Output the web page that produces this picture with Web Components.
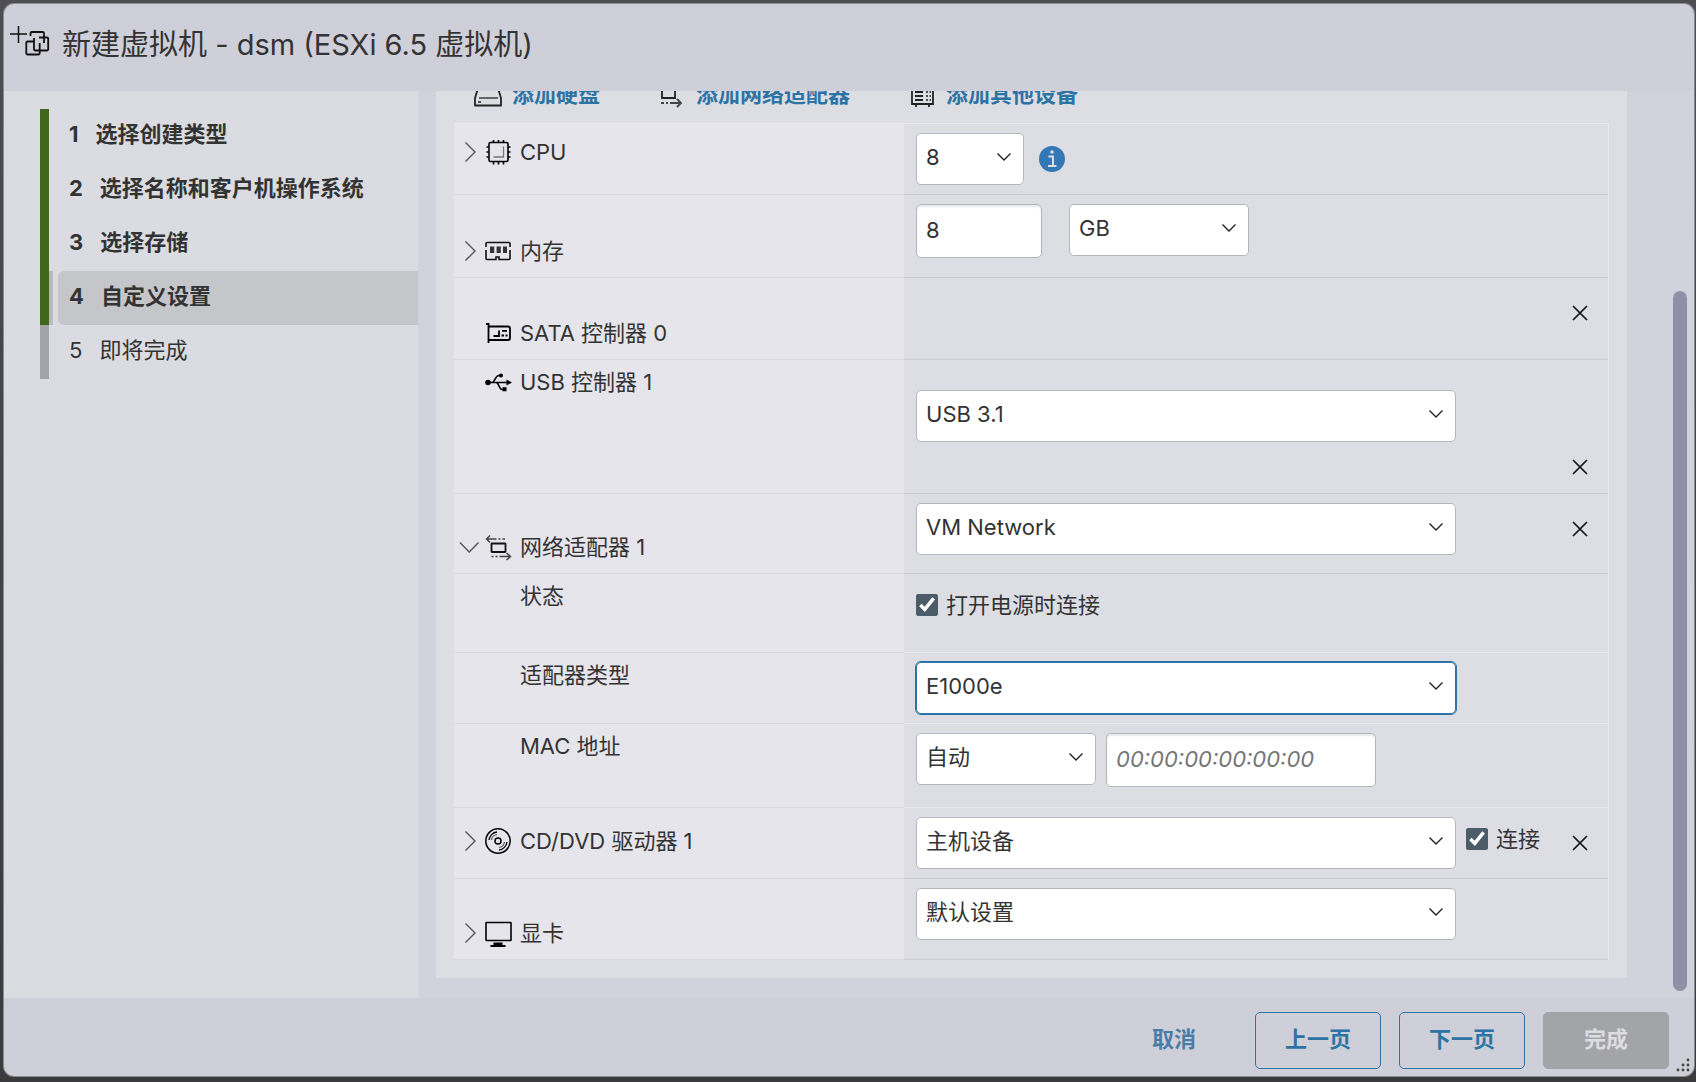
<!DOCTYPE html>
<html lang="zh-CN">
    <head>
        <meta charset="utf-8">
        <title>新建虚拟机</title>
        <style>
            html {
                height: 100%;
            }
            body {
                margin: 0;
                min-height: 100%;
                display: flex;
                box-sizing: border-box;
                padding: 4px 2px 6px 4px;
                background: linear-gradient(#4d4d52, #3b3b3e);
                color: #333;
                font: 22px/28px Inter, "Noto Sans CJK SC", sans-serif;
            }
        </style>
    </head>
    <body>
        <vm-wizard>
            <span slot="title">新建虚拟机 - dsm (ESXi 6.5 虚拟机)</span>

            <wizard-steps slot="steps">
                <wizard-step number="1" state="done">选择创建类型</wizard-step>
                <wizard-step number="2" state="done">选择名称和客户机操作系统</wizard-step>
                <wizard-step number="3" state="done">选择存储</wizard-step>
                <wizard-step number="4" state="active">自定义设置</wizard-step>
                <wizard-step number="5">即将完成</wizard-step>
            </wizard-steps>

            <hw-panel>
                <hw-action slot="action" icon="disk">添加硬盘</hw-action>
                <hw-action slot="action" icon="network">添加网络适配器</hw-action>
                <hw-action slot="action" icon="device">添加其他设备</hw-action>

                <hw-row icon="cpu" arrow="closed" style="--label-top: 14px; --gap: 15px">
                    <label slot="label" for="cpu">CPU</label>
                    <clr-select size="small"><select id="cpu"><option>8</option></select></clr-select>
                    <hw-icon name="info"></hw-icon>
                </hw-row>
                <hw-row icon="memory" arrow="closed" align="end" style="--row: 83px; --gap: 27px">
                    <label slot="label" for="memory">内存</label>
                    <clr-input size="small"><input id="memory" value="8"></clr-input>
                    <clr-select size="medium"><select aria-label="单位"><option>GB</option></select></clr-select>
                </hw-row>
                <hw-row icon="sata" align="end" removable style="--row: 82px">
                    <span slot="label">SATA 控制器 0</span>
                </hw-row>
                <hw-row icon="usb" removable="end" style="--row: 134px; --control-top: 30px">
                    <label slot="label" for="usb">USB 控制器 1</label>
                    <clr-select><select id="usb"><option>USB 3.1</option></select></clr-select>
                </hw-row>
                <hw-row icon="adapter" arrow="open" align="end" removable style="--row: 80px">
                    <label slot="label" for="network">网络适配器 1</label>
                    <clr-select><select id="network"><option>VM Network</option></select></clr-select>
                </hw-row>
                <hw-row light style="--row: 79px">
                    <span slot="label">状态</span>
                    <clr-check><input type="checkbox" id="power" checked><label for="power">打开电源时连接</label></clr-check>
                </hw-row>
                <hw-row light>
                    <label slot="label" for="type">适配器类型</label>
                    <clr-select focused><select id="type"><option>E1000e</option></select></clr-select>
                </hw-row>
                <hw-row light style="--row: 84px">
                    <label slot="label" for="mac-mode">MAC 地址</label>
                    <clr-select size="medium"><select id="mac-mode"><option>自动</option></select></clr-select>
                    <clr-input><input aria-label="MAC 地址" placeholder="00:00:00:00:00:00"></clr-input>
                </hw-row>
                <hw-row icon="cd" arrow="closed" align="center" removable>
                    <label slot="label" for="cd">CD/DVD 驱动器 1</label>
                    <clr-select><select id="cd"><option>主机设备</option></select></clr-select>
                    <clr-check><input type="checkbox" id="connect" checked><label for="connect">连接</label></clr-check>
                </hw-row>
                <hw-row icon="display" arrow="closed" align="end" style="--row: 81px">
                    <label slot="label" for="display">显卡</label>
                    <clr-select><select id="display"><option>默认设置</option></select></clr-select>
                </hw-row>
            </hw-panel>

            <clr-button slot="buttons" kind="link">取消</clr-button>
            <clr-button slot="buttons">上一页</clr-button>
            <clr-button slot="buttons">下一页</clr-button>
            <clr-button slot="buttons" disabled>完成</clr-button>
        </vm-wizard>

        <script>
            const icons = {
                vm: `<svg width="40" height="32" viewBox="0 0 40 32" fill="none" stroke="#111" stroke-width="1.8">
                    <path d="M0 9h17M8.500 1v17" stroke-width="1.500"/>
                    <path d="M20.500 11V8.500a1.500 1.500 0 0 1 1.500-1.500h10.500a1.500 1.500 0 0 1 1.500 1.500V18M29 12.500h8a1.200 1.200 0 0 1 1.200 1.200v10.600a1.200 1.200 0 0 1-1.200 1.200H25.200a1.200 1.200 0 0 1-1.200-1.200V13"/>
                    <path d="M24 16.500h-6.500a1.200 1.200 0 0 0-1.200 1.200v10.600a1.200 1.200 0 0 0 1.200 1.200H28.500a1.200 1.200 0 0 0 1.200-1.200V18"/>
                </svg>`,
                disk: `<svg width="28" height="28" viewBox="0 0 28 28" fill="none" stroke="#222" stroke-width="1.8">
                    <path d="M5 5h18l4 13v7.500H1V18z" stroke-linejoin="round"/>
                    <path d="M5 18h19" stroke="#666"/><path d="M4 22h3" stroke-width="1.500"/>
                </svg>`,
                network: `<svg width="28" height="28" viewBox="0 0 28 28" fill="none" stroke="#222" stroke-width="1.8">
                    <path d="M4 7h13v11H4z"/>
                    <path d="M3 23h3M8 23h2M12 23h11M19 19l4 4-4 4" stroke="#444"/>
                </svg>`,
                device: `<svg width="28" height="28" viewBox="0 0 28 28" fill="none" stroke="#222" stroke-width="1.8">
                    <path d="M4 4h21v20H4zM8 24v3M21 24v3"/>
                    <path d="M7 8h8M7 12h8M7 16h8M7 20h8"/>
                    <path d="M18 12h2M21.500 12h1.500M18 16h2M21.500 16h1.500M18 20h2M21.500 20h1.500" stroke-width="1.500"/>
                </svg>`,
                cpu: `<svg width="28" height="28" viewBox="0 0 28 28" fill="none" stroke="#000" stroke-width="1.600">
                    <rect x="5" y="4.500" width="19" height="19" rx="1.500"/>
                    <path d="M9.500 2v2M14.500 2v2M19.500 2v2M9.500 24v2.500M14.500 24v2.500M19.500 24v2.500M2.500 9h2M2.500 14h2M2.500 19h2M24 9h2.500M24 14h2.500M24 19h2.500"/>
                    <path d="M19.500 8.500v10.500H9.500" stroke="#777" stroke-width="1.300"/>
                </svg>`,
                memory: `<svg width="28" height="28" viewBox="0 0 28 28" fill="none" stroke="#111" stroke-width="1.600">
                    <path d="M2 10V6.500q0-1 1-1h22q1 0 1 1V10M2 13v8.500q0 1 1 1h9V20h3v2.500h10q1 0 1-1V13"/>
                    <path d="M6 9.500h4.200v6.500H6zM12.600 9.500h4.200v6.500h-4.200zM19 9.500h4v6.500h-4z" fill="#333" stroke="none"/>
                </svg>`,
                sata: `<svg width="28" height="28" viewBox="0 0 28 28" fill="none" stroke="#000" stroke-width="1.800">
                    <path d="M2 5h2.500v19M4.500 7.500h19.500q2 0 2 2v9.500q0 2-2 2H4.500"/>
                    <path d="M9.500 17h5.500v-5.500M18 11.800h5M17.500 16.500h2.500M21.500 16.500h2"/>
                </svg>`,
                usb: `<svg width="28" height="28" viewBox="0 0 28 28" fill="none" stroke="#000" stroke-width="1.600">
                    <path d="M3 14.500h20M8 14.500c3 0 3-7 7-7h2M12 14.500c3 0 3 7 6 7h1"/>
                    <circle cx="4" cy="14.500" r="2.800" fill="#000" stroke="none"/>
                    <circle cx="17" cy="7.500" r="2" fill="#000" stroke="none"/>
                    <path d="M18.500 19.300h4v4h-4zM22.500 11.500l5.500 3-5.500 3z" fill="#000" stroke="none"/>
                </svg>`,
                adapter: `<svg width="28" height="28" viewBox="0 0 28 28" fill="none" stroke="#111" stroke-width="1.800">
                    <rect x="7.500" y="10.500" width="14" height="8.500" rx=".5"/>
                    <path d="M2.500 6h10M14.500 6h2M18.500 6h2.500M6 2.500L2.500 6L6 9.500M7.500 23.500h2M11.500 23.500h2M15.500 23.500h11M22.500 20l4 3.500-4 3.500" stroke="#444" stroke-width="1.500"/>
                </svg>`,
                cd: `<svg width="28" height="28" viewBox="0 0 28 28" fill="none" stroke="#000" stroke-width="1.500">
                    <circle cx="14" cy="14" r="12.200"/><circle cx="14" cy="14" r="3"/>
                    <path d="M5 13a9 9 0 0 1 8-8M23 15a9 9 0 0 1-8 8" stroke-width="1.300"/>
                    <path d="M7.500 13A6.500 6.500 0 0 1 13 7.500M20.500 15a6.500 6.500 0 0 1-5.500 5.500" stroke="#555" stroke-width="1.200"/>
                </svg>`,
                display: `<svg width="28" height="28" viewBox="0 0 28 28" fill="none" stroke="#000" stroke-width="1.600">
                    <rect x="2" y="3.500" width="25" height="18" rx=".5"/>
                    <path d="M9.500 23.500h9v2.500h3v2h-15v-2h3z" fill="#000" stroke="none"/>
                </svg>`,
                info: `<svg width="26" height="26" viewBox="0 0 26 26">
                    <circle cx="13" cy="13" r="13" fill="#3477b5"/>
                    <circle cx="13" cy="6" r="1.800" fill="#dddee4"/>
                    <path d="M9.500 10.500h4.500v9M9 20h8.500" fill="none" stroke="#dddee4" stroke-width="2"/>
                </svg>`,
                closed: `<svg width="20" height="20" viewBox="0 0 20 20" fill="none" stroke="#555" stroke-width="1.400"><path d="M6.500 .5l9.500 9.500-9.500 9.500"/></svg>`,
                open: `<svg width="20" height="20" viewBox="0 0 20 20" fill="none" stroke="#555" stroke-width="1.400"><path d="M1 5.500l9.200 9.500L19.500 5.500"/></svg>`,
                caret: `<svg width="16" height="10" viewBox="0 0 16 10" fill="none" stroke="#222" stroke-width="1.400"><path d="M1.500 1.500L8 8l6.500-6.500"/></svg>`,
                close: `<svg width="16" height="16" viewBox="0 0 16 16" fill="none" stroke="#111" stroke-width="1.700"><path d="M1 1l14 14M15 1L1 15"/></svg>`,
                grip: `<svg width="14" height="14" viewBox="0 0 14 14" fill="#444">
                    <circle cx="12" cy="2" r="1.400"/><circle cx="7" cy="7" r="1.400"/><circle cx="12" cy="7" r="1.400"/>
                    <circle cx="2" cy="12" r="1.400"/><circle cx="7" cy="12" r="1.400"/><circle cx="12" cy="12" r="1.400"/>
                </svg>`
            };

            function define(name, render) {
                customElements.define(name, class extends HTMLElement {
                    connectedCallback() {
                        if (this.shadowRoot)
                            return;
                        this.attachShadow({ mode: 'open' }).innerHTML = render(this);
                    }
                });
            }

            define('hw-icon', el => `
                <style>
                    :host { display: block; flex: none; }
                    svg { display: block; }
                </style>
                ${icons[el.getAttribute('name')]}`);

            define('vm-wizard', () => `
                <style>
                    :host {
                        position: relative;
                        flex: 1;
                        display: flex;
                        flex-direction: column;
                        min-width: 0;
                        background: #cfcfd9;
                        border-radius: 10px;
                        box-shadow: 0 0 0 1px #8b8b90;
                        overflow: hidden;
                    }
                    header {
                        display: flex;
                        align-items: center;
                        gap: 12px;
                        height: 87px;
                        padding-left: 6px;
                        box-sizing: border-box;
                    }
                    h1 {
                        margin: 0;
                        padding-bottom: 6px;
                        font-size: 29px;
                        line-height: 36px;
                        font-weight: 400;
                    }
                    header hw-icon { padding-bottom: 14px; }
                    main {
                        flex: 1;
                        display: grid;
                        grid-template-columns: 414px 1fr 67px;
                        background: #d2d2dc;
                    }
                    .side, .track { display: flex; }
                    .content { padding: 0 0 18px 18px; }
                    .track { padding: 200px 0 7px 46px; }
                    .thumb {
                        width: 14px;
                        border-radius: 7px;
                        background: #8f8fa5;
                    }
                    footer {
                        display: flex;
                        justify-content: flex-end;
                        gap: 18px;
                        padding: 14px 25px 7px;
                    }
                    .grip { position: absolute; right: 4px; bottom: 4px; }
                </style>
                <header><hw-icon name="vm"></hw-icon><h1><slot name="title"></slot></h1></header>
                <main>
                    <div class="side"><slot name="steps"></slot></div>
                    <div class="content"><slot></slot></div>
                    <div class="track"><div class="thumb"></div></div>
                </main>
                <footer><slot name="buttons"></slot></footer>
                <hw-icon class="grip" name="grip"></hw-icon>`);

            define('wizard-steps', () => `
                <style>
                    :host {
                        display: block;
                        flex: 1;
                        padding: 18px 0 0 36px;
                        background: #dbdce1;
                    }
                </style>
                <nav><slot></slot></nav>`);

            define('wizard-step', el => `
                <style>
                    :host {
                        display: flex;
                        height: 54px;
                        border-left: 9px solid #a3a4a8;
                    }
                    :host([state]) {
                        border-color: #40681d;
                        font-weight: 700;
                    }
                    :host([state=active]) {
                        background: linear-gradient(#b9babe, #b9babe) 0 0 / 4px 100% no-repeat;
                    }
                    button {
                        flex: 1;
                        display: flex;
                        align-items: center;
                        gap: 17px;
                        margin: 0 0 0 9px;
                        padding: 0 0 4px 11px;
                        border: 0;
                        border-radius: 6px 0 0 6px;
                        background: none;
                        color: inherit;
                        font: inherit;
                    }
                    :host([state=active]) button { background: #c5c6ca; }
                </style>
                <button type="button"><span>${el.getAttribute('number')}</span><slot></slot></button>`);

            define('hw-panel', () => `
                <style>
                    :host {
                        display: block;
                        padding: 0 18px 18px;
                        background: #dddee4;
                    }
                    .actions {
                        display: flex;
                        align-items: flex-end;
                        gap: 58px;
                        height: 32px;
                        padding-left: 20px;
                        box-sizing: border-box;
                        overflow: hidden;
                    }
                    .rows {
                        border: solid #e8e8ed;
                        border-width: 1px 1px 0 0;
                    }
                </style>
                <div class="actions"><slot name="action"></slot></div>
                <div class="rows"><slot></slot></div>`);

            define('hw-action', el => `
                <style>
                    :host { display: block; padding-bottom: 15px; }
                    button {
                        display: flex;
                        align-items: center;
                        gap: 10px;
                        padding: 0;
                        border: 0;
                        background: none;
                        color: #2d73a3;
                        font: inherit;
                        font-weight: 700;
                    }
                </style>
                <button type="button"><hw-icon name="${el.getAttribute('icon')}"></hw-icon><slot></slot></button>`);

            define('hw-row', el => `
                <style>
                    :host {
                        display: grid;
                        grid-template-columns: 39% 1fr;
                        min-height: var(--row, 71px);
                    }
                    .name {
                        display: flex;
                        align-items: flex-start;
                        padding: var(--label-top, 8px) 0 12px 5px;
                        background: #e6e5eb;
                        border-bottom: 1px solid #d9d9de;
                    }
                    :host([align=end]) .name { align-items: flex-end; }
                    :host([align=center]) .name { align-items: center; padding: 0 0 4px 5px; }
                    .arrow {
                        display: flex;
                        align-items: center;
                        width: 20px;
                        height: 28px;
                        margin-right: 5px;
                    }
                    .arrow button { display: block; padding: 0; border: 0; background: none; }
                    .icon { width: 28px; margin-right: 8px; }
                    .value {
                        display: flex;
                        justify-content: space-between;
                        border-bottom: 1px solid #cbccd2;
                    }
                    :host([light]) .value { border-color: #e8e8ed; }
                    .controls {
                        display: flex;
                        align-items: flex-start;
                        gap: var(--gap, 10px);
                        padding: var(--control-top, 9px) 0 9px 12px;
                    }
                    ::slotted(hw-icon) { align-self: center; }
                    .remove {
                        width: 56px;
                        height: 52px;
                        margin-top: 9px;
                        padding: 0;
                        border: 0;
                        background: none;
                        display: flex;
                        align-items: center;
                        justify-content: center;
                    }
                    :host([removable=end]) .remove { align-self: flex-end; }
                </style>
                <div class="name">
                    <div class="arrow">${el.hasAttribute('arrow') ? `<button type="button" aria-label="展开"><hw-icon name="${el.getAttribute('arrow')}"></hw-icon></button>` : ''}</div>
                    <div class="icon">${el.hasAttribute('icon') ? `<hw-icon name="${el.getAttribute('icon')}"></hw-icon>` : ''}</div>
                    <slot name="label"></slot>
                </div>
                <div class="value">
                    <div class="controls"><slot></slot></div>
                    ${el.hasAttribute('removable') ? '<button class="remove" type="button" aria-label="移除"><hw-icon name="close"></hw-icon></button>' : ''}
                </div>`);

            define('clr-select', () => `
                <style>
                    :host {
                        position: relative;
                        display: block;
                        width: 540px;
                    }
                    :host([size=small]) { width: 108px; }
                    :host([size=medium]) { width: 180px; }
                    ::slotted(select) {
                        appearance: none;
                        display: block;
                        width: 100%;
                        height: 52px;
                        box-sizing: border-box;
                        margin: 0;
                        padding: 0 32px 4px 9px;
                        border: 1px solid #b5b5ba;
                        border-radius: 5px;
                        background: #fff;
                        color: #333;
                        font: inherit;
                    }
                    :host([focused]) ::slotted(select) {
                        outline: 1px solid #2b72a6;
                        border-color: #2b72a6;
                    }
                    hw-icon {
                        position: absolute;
                        right: 12px;
                        top: 19px;
                        pointer-events: none;
                    }
                </style>
                <slot></slot><hw-icon name="caret"></hw-icon>`);

            define('clr-input', () => `
                <style>
                    :host { display: block; width: 270px; }
                    :host([size=small]) { width: 126px; }
                    ::slotted(input) {
                        display: block;
                        width: 100%;
                        height: 54px;
                        box-sizing: border-box;
                        margin: 0;
                        padding: 0 9px 2px;
                        border: 1px solid #b5b5ba;
                        border-radius: 5px;
                        background: #fff;
                        box-shadow: inset 0 2px 2px #e8e8ec;
                        color: #333;
                        font: inherit;
                    }
                    ::slotted(input:placeholder-shown) { font-style: italic; }
                </style>
                <slot></slot>`);

            define('clr-check', () => `
                <style>
                    :host {
                        display: flex;
                        align-items: center;
                        gap: 8px;
                        height: 44px;
                        white-space: nowrap;
                    }
                    ::slotted(input) {
                        width: 22px;
                        height: 22px;
                        margin: 0;
                        accent-color: #4c5c68;
                    }
                </style>
                <slot></slot>`);

            define('clr-button', el => `
                <style>
                    :host { display: block; }
                    button {
                        min-width: 126px;
                        height: 57px;
                        padding: 0 12px 4px;
                        border: 1px solid #2d73a3;
                        border-radius: 5px;
                        background: none;
                        color: #2d73a3;
                        font: inherit;
                        font-weight: 700;
                    }
                    :host([kind=link]) button { border-color: transparent; color: #4a7da6; }
                    button:disabled { border-color: #a3a4a8; background: #a3a4a8; color: #dcdce1; }
                </style>
                <button type="button" ${el.hasAttribute('disabled') ? 'disabled' : ''}><slot></slot></button>`);
        </script>
    </body>
</html>
